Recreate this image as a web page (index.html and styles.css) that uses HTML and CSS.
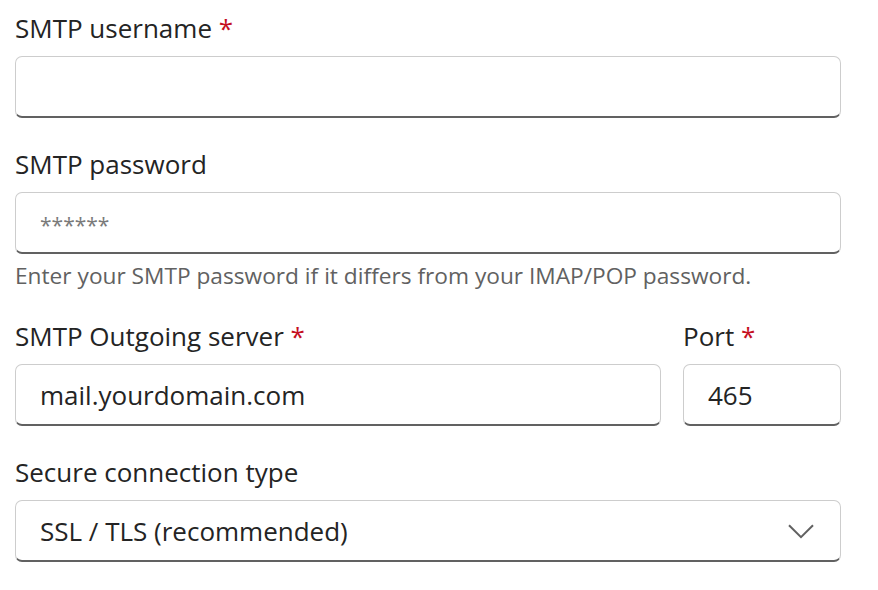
FILE: index.html
```html
<!DOCTYPE html>
<html lang="en">
<head>
<meta charset="utf-8">
<title>SMTP settings</title>
<link rel="stylesheet" href="styles.css">
</head>
<body>
<form class="form">
  <div class="field">
    <label class="label" for="user">SMTP username <span class="req">*</span></label>
    <input class="input" id="user" type="text">
  </div>
  <div class="field">
    <label class="label" for="pass">SMTP password</label>
    <input class="input" id="pass" type="text" placeholder="******">
    <div class="hint">Enter your SMTP password if it differs from your IMAP/POP password.</div>
  </div>
  <div class="row">
    <div class="field grow">
      <label class="label" for="server">SMTP Outgoing server <span class="req">*</span></label>
      <input class="input" id="server" type="text" value="mail.yourdomain.com">
    </div>
    <div class="field port">
      <label class="label" for="port">Port <span class="req">*</span></label>
      <input class="input" id="port" type="text" value="465">
    </div>
  </div>
  <div class="field">
    <span class="label">Secure connection type</span>
    <div class="select">
      <span>SSL / TLS (recommended)</span>
      <svg class="chev" width="26" height="15" viewBox="0 0 26 15"><path d="M1 1.2 L13 13.2 L25 1.2" fill="none" stroke="#616161" stroke-width="2"/></svg>
    </div>
  </div>
</form>
</body>
</html>
```
FILE: styles.css
```css
* { box-sizing: border-box; }
html, body { margin: 0; padding: 0; background: #ffffff; }
body {
  font-family: "Open Sans", "Noto Sans", "Liberation Sans", sans-serif;
  color: #242424;
}
.form {
  width: 878px;
  padding: 0 37px 0 15px;
  display: flex;
  flex-direction: column;
  gap: 18px;
}
.field { display: flex; flex-direction: column; }
.row { display: flex; gap: 22px; }
.grow { flex: 1; }
.port { width: 158px; }
.label {
  display: block;
  font-size: 26px;
  line-height: 36px;
  padding-top: 10px;
  margin-bottom: 10px;
  color: #242424;
}
.req { color: #c50f1f; }
.input, .select {
  height: 62px;
  width: 100%;
  border: 1px solid #cdcdcd;
  border-bottom: 2px solid #616161;
  border-radius: 7px;
  background: #ffffff;
  padding: 0 24px;
  font-family: inherit;
  font-size: 26px;
  color: #242424;
  outline: none;
}
.input::placeholder { color: #7a7a7a; font-size: 21px; }
.select {
  display: flex;
  align-items: center;
  justify-content: space-between;
  padding-right: 26px;
}
.chev { display: block; margin-top: 2px; }
.hint {
  margin-top: 7px;
  font-size: 22.7px;
  line-height: 29px;
  color: #616161;
}
```
